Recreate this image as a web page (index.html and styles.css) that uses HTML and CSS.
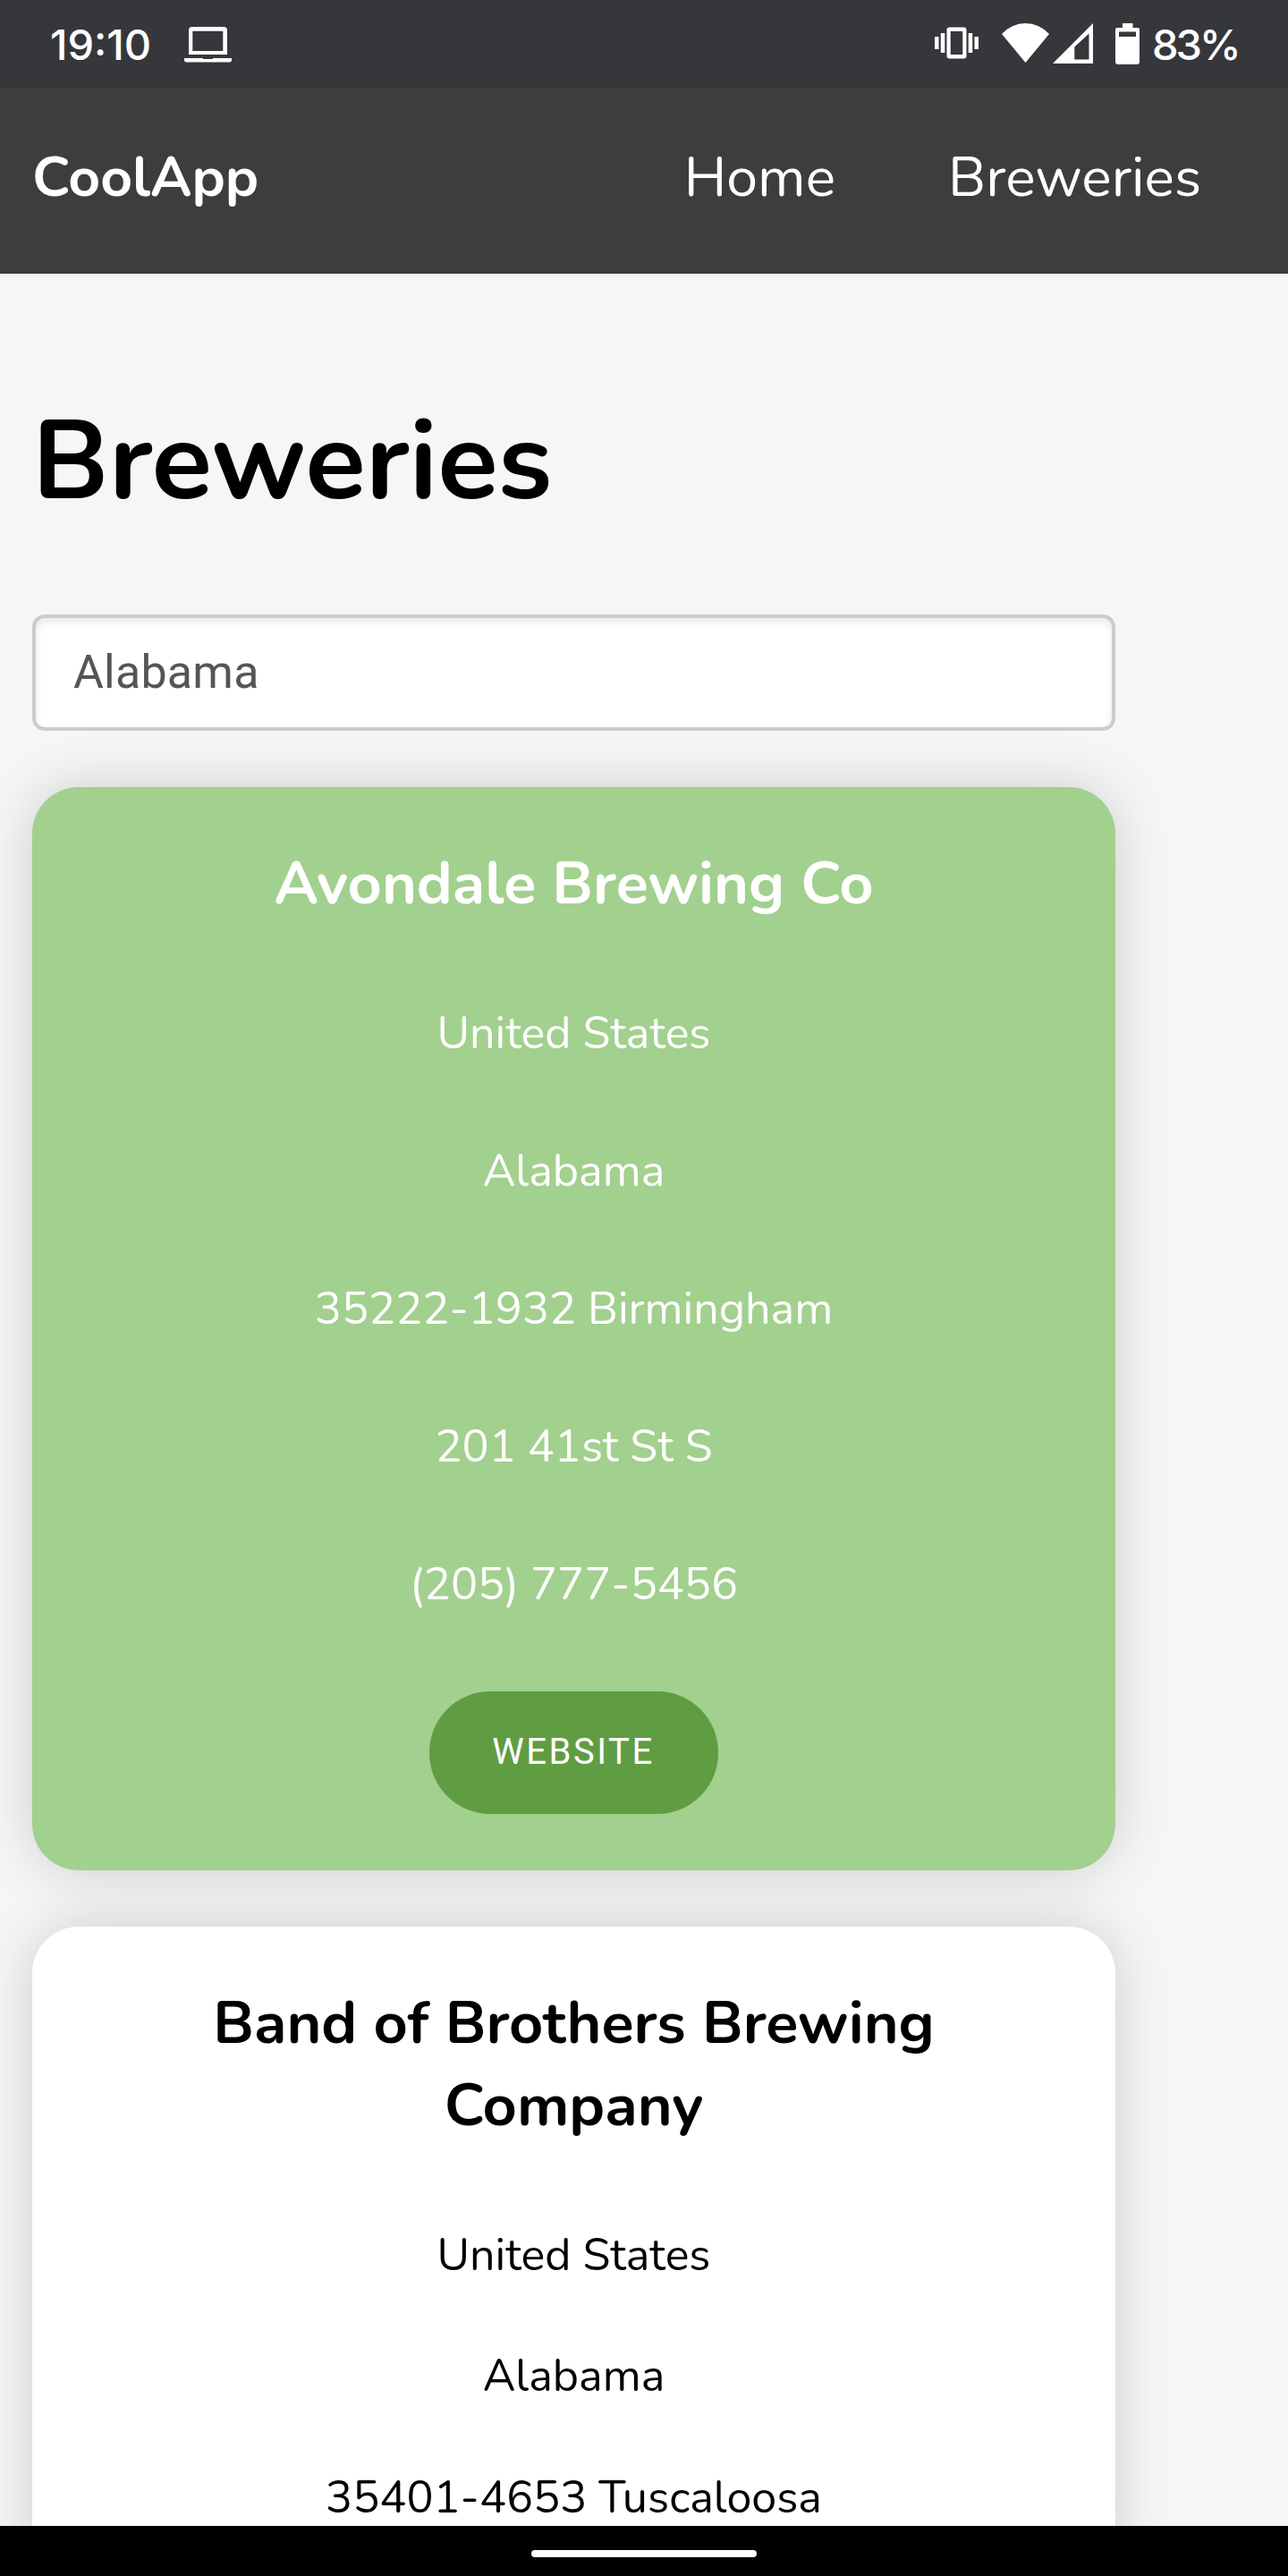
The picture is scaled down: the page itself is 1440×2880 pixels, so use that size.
FILE: index.html
```html
<!DOCTYPE html>
<html lang="en">
<head>
<meta charset="utf-8">
<title>CoolApp - Breweries</title>
<link rel="stylesheet" href="styles.css">
</head>
<body>
<div class="screen">
  <div class="status-bar">
    <div class="status-left">
      <span class="clock">19:10</span>
      <svg class="icon-laptop" width="53" height="40" viewBox="0 0 53 40" fill="#fff">
        <path fill-rule="evenodd" d="M9 0H44Q48 0 48 4V31H5V4Q5 0 9 0ZM9.300 4.700V27H43.300V4.700Z"/>
        <path d="M0 35H21V36H32V35H53V37Q53 39.500 50 39.500H3Q0 39.500 0 37Z"/>
      </svg>
    </div>
    <div class="status-right">
      <svg class="icon-vibrate" width="49" height="36" viewBox="0 0 49 36" fill="#fff">
        <path fill-rule="evenodd" d="M16.500 .5H32.500Q35.500 .5 35.500 3.500V32.500Q35.500 35.500 32.500 35.500H16.500Q13.500 35.500 13.500 32.500V3.500Q13.500 .5 16.500 .5ZM17.700 5V31H31.300V5Z"/>
        <path d="M0 11H4.500V25H0ZM6.800 7H11.300V29H6.800ZM37.700 7H42.200V29H37.700ZM44.500 11H49V25H44.500Z"/>
      </svg>
      <svg class="icon-wifi" width="53" height="44" viewBox="0 0 53 44" fill="#fff">
        <path d="M26.500 44L0 12A35.300 35.300 0 0 1 53 12Z"/>
      </svg>
      <svg class="icon-signal" width="45" height="45" viewBox="0 0 45 45" fill="#fff">
        <path fill-rule="evenodd" d="M0 45L45 0V45ZM24.300 26.500V40.500H40.500V11.500Z"/>
      </svg>
      <svg class="icon-battery" width="27" height="46" viewBox="0 0 27 46" fill="#fff">
        <path fill-rule="evenodd" d="M8 0H19.500V5H25Q27 5 27 7V43Q27 46 24 46H3Q0 46 0 43V7Q0 5 2 5H8ZM4 9.500V15H23V9.500Z"/>
      </svg>
      <span class="battery-level">83%</span>
    </div>
  </div>

  <header class="header">
    <div class="brand">CoolApp</div>
    <nav class="nav">
      <a class="nav-link">Home</a>
      <a class="nav-link">Breweries</a>
    </nav>
  </header>

  <main class="main">
    <h1 class="title">Breweries</h1>
    <div class="select">Alabama</div>

    <article class="card card-active">
      <h2 class="card-title">Avondale Brewing Co</h2>
      <p class="card-line">United States</p>
      <p class="card-line">Alabama</p>
      <p class="card-line">35222-1932 Birmingham</p>
      <p class="card-line">201 41st St S</p>
      <p class="card-line">(205) 777-5456</p>
      <a class="button">WEBSITE</a>
    </article>

    <article class="card card-compact">
      <h2 class="card-title">Band of Brothers Brewing Company</h2>
      <p class="card-line">United States</p>
      <p class="card-line">Alabama</p>
      <p class="card-line">35401-4653 Tuscaloosa</p>
    </article>
  </main>

  <div class="gesture-bar"><div class="gesture-pill"></div></div>
</div>
</body>
</html>
```
FILE: styles.css
```css
* { box-sizing: border-box; }

body {
  margin: 0;
  background: #f6f6f6;
  font-family: Nunito, Lato, sans-serif;
  color: #000;
}

h1, h2, p { margin: 0; }
svg { display: block; flex: none; }

.screen {
  display: flex;
  flex-direction: column;
  width: 1440px;
  height: 2880px;
  overflow: hidden;
}

/* System status bar */
.status-bar {
  flex: none;
  display: flex;
  justify-content: space-between;
  height: 98px;
  padding: 0 55px 0 56px;
  background: #36373b;
  color: #fff;
  font-family: Inter, Roboto, sans-serif;
  font-weight: 500;
  font-size: 47px;
  line-height: 100px;
}
.status-left, .status-right { display: flex; align-items: flex-start; }
.clock { width: 150px; }
.icon-laptop { margin-top: 30px; }
.icon-vibrate { margin: 30px 26px 0 0; }
.icon-wifi { margin: 26px 4px 0 0; }
.icon-signal { margin: 26px 25px 0 0; }
.icon-battery { margin: 26px 14px 0 0; }
.battery-level { width: 97px; letter-spacing: -3px; white-space: nowrap; }

/* App header */
.header {
  flex: none;
  display: flex;
  align-items: center;
  justify-content: space-between;
  height: 208px;
  padding: 0 97px 7px 36px;
  background: #3d3d3d;
  color: #fff;
  line-height: 86px;
}
.brand { font-size: 62.4px; font-weight: 700; }
.nav { display: flex; gap: 126px; font-size: 62.6px; }

/* Content column */
.main {
  flex: 1;
  min-height: 0;
  display: flex;
  flex-direction: column;
  gap: 63px;
  padding: 125px 193px 0 36px;
  overflow: hidden;
}
.title {
  margin-bottom: 23px;
  font-size: 124.6px;
  font-weight: 700;
  line-height: 170px;
}
.select {
  flex: none;
  height: 130px;
  padding: 0 42px;
  border: 4px solid #ccc;
  border-radius: 14px;
  background: #fff;
  box-shadow: inset 0 4px 8px rgba(0, 0, 0, .09);
  color: #555;
  font-family: Roboto, sans-serif;
  font-size: 52px;
  line-height: 122px;
  letter-spacing: .2px;
}

/* Brewery cards */
.card {
  flex: none;
  display: flex;
  flex-direction: column;
  align-items: center;
  gap: 86px;
  padding: 63px;
  border-radius: 52px;
  background: #fff;
  box-shadow: 0 0 62px rgba(0, 0, 0, .17);
  text-align: center;
}
.card-active { background: #a2d08e; color: #fff; }
.card-title { font-size: 66.6px; font-weight: 700; line-height: 92px; }
.card-line { font-size: 50.2px; line-height: 68px; }
.card-active .card-line { padding-top: 1px; margin-bottom: -1px; }
.card-compact { gap: 71.5px; }
.card-compact .card-title { margin-bottom: 17px; }
.card-compact .card-line { line-height: 64px; }
.button {
  height: 137px;
  padding: 0 71px 0 70px;
  border-radius: 68px;
  background: #609c42;
  font-family: Roboto, sans-serif;
  font-size: 40px;
  line-height: 136px;
  letter-spacing: 2.5px;
}

/* System gesture bar */
.gesture-bar {
  flex: none;
  display: flex;
  justify-content: center;
  height: 56px;
  padding-top: 27px;
  background: #000;
}
.gesture-pill { width: 252px; height: 8px; border-radius: 4px; background: #fff; }
```
